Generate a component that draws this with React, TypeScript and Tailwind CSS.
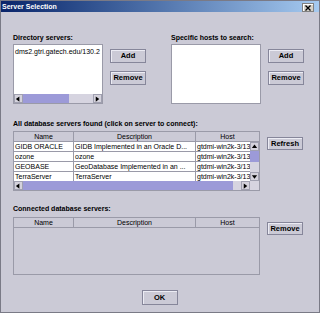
import type { ReactNode } from 'react'

const font = { fontFamily: '"Liberation Sans", Arial, sans-serif' }

function Button({ children, w = 'w-[36px]', h = 'h-[14px]' }: { children: ReactNode; w?: string; h?: string }) {
  return (
    <div
      className={`${w} ${h} shrink-0 flex items-center justify-center border border-[#86869a] shadow-[inset_1px_1px_0_#ececf4] text-[7.5px] font-bold text-black leading-none`}
    >
      {children}
    </div>
  )
}

function Arrow({ dir }: { dir: 'left' | 'right' | 'up' | 'down' }) {
  const pts = {
    left: '5,1 5,7 1,4',
    right: '2,1 2,7 6,4',
    up: '1,5 7,5 4,1',
    down: '1,2 7,2 4,6',
  }[dir]
  return (
    <div className="w-[9px] h-[9px] shrink-0 flex items-center justify-center border border-[#a0a0b0] bg-[#d4d2dc]">
      <svg width="8" height="8" viewBox="0 0 8 8">
        <polygon points={pts} fill="#000" />
      </svg>
    </div>
  )
}

const rows = [
  ['GIDB ORACLE', 'GIDB Implemented in an Oracle D...'],
  ['ozone', 'ozone'],
  ['GEOBASE', 'GeoDatabase Implemented in an ...'],
  ['TerraServer', 'TerraServer'],
]

function Header() {
  return (
    <div className="flex h-[10px] shrink-0 text-[7px] leading-[9px] text-black border-b border-[#9a9aa8]">
      <div className="w-[60px] shrink-0 text-center border-r border-[#9a9aa8]">Name</div>
      <div className="w-[122px] shrink-0 text-center border-r border-[#9a9aa8]">Description</div>
      <div className="flex-1 min-w-0 text-center">Host</div>
    </div>
  )
}

export default function App() {
  return (
    <div style={font} className="w-[320px] h-[313px] flex flex-col bg-[#cbcad6] border border-[#7a7a86] overflow-hidden">
      {/* タイトルバー */}
      <div className="h-[11px] flex items-center justify-between pl-[1px] pr-[5px] bg-gradient-to-r from-[#0a246a] to-[#a6caf0]">
        <span className="text-[7px] font-bold text-white leading-none">Server Selection</span>
        <div className="w-[12px] h-[9px] mt-[2px] flex items-center justify-center bg-[#d4d0c8] border border-[#808080] shadow-[inset_1px_1px_0_#fff]">
          <svg width="6" height="6" viewBox="0 0 6 6">
            <path d="M0.5 0.5 L5.5 5.5 M5.5 0.5 L0.5 5.5" stroke="#000" strokeWidth="1.3" />
          </svg>
        </div>
      </div>

      <div className="flex flex-col pl-[12px] pr-[16px]">
        {/* 上段 */}
        <div className="flex mt-[21px] gap-[25px]">
          <div className="flex flex-col">
            <div className="h-[9px] text-[7px] leading-[9px] font-bold text-black">Directory servers:</div>
            <div className="flex mt-[2px] gap-[7px]">
              <div className="w-[90px] h-[60px] shrink-0 flex flex-col bg-white border border-[#9a9aa8] overflow-hidden">
                <div className="flex-1 px-[1px] pt-[2px] text-[7px] leading-[9px] text-black whitespace-nowrap overflow-hidden">
                  dms2.gtri.gatech.edu/130.2
                </div>
                <div className="flex h-[9px] bg-[#d6d4e0]">
                  <Arrow dir="left" />
                  <div className="w-[46px] bg-[#9c9ad8]" />
                  <div className="flex-1" />
                  <Arrow dir="right" />
                </div>
              </div>
              <div className="flex flex-col gap-[8px] pt-[5px]">
                <Button>Add</Button>
                <Button>Remove</Button>
              </div>
            </div>
          </div>

          <div className="flex flex-col">
            <div className="h-[9px] text-[7px] leading-[9px] font-bold text-black">Specific hosts to search:</div>
            <div className="flex mt-[2px] gap-[7px]">
              <div className="w-[90px] h-[60px] shrink-0 bg-white border border-[#9a9aa8]" />
              <div className="flex flex-col gap-[8px] pt-[5px]">
                <Button>Add</Button>
                <Button>Remove</Button>
              </div>
            </div>
          </div>
        </div>

        {/* 検索結果 */}
        <div className="h-[9px] mt-[15px] text-[7px] leading-[9px] font-bold text-black">
          All database servers found (click on server to connect):
        </div>
        <div className="flex mt-[3px] gap-[7px]">
          <div className="w-[247px] h-[60px] shrink-0 flex flex-col border border-[#9a9aa8] overflow-hidden">
            <Header />
            <div className="flex flex-1 min-h-0">
              <div className="flex-1 min-w-0 flex flex-col bg-white">
                {rows.map(([name, desc]) => (
                  <div key={name} className="flex h-[10px] shrink-0 text-[7px] leading-[9px] text-black border-b border-[#9a9aa8]">
                    <div className="w-[60px] shrink-0 px-[1px] border-r border-[#9a9aa8] whitespace-nowrap overflow-hidden">{name}</div>
                    <div className="w-[122px] shrink-0 px-[1px] border-r border-[#9a9aa8] whitespace-nowrap overflow-hidden">{desc}</div>
                    <div className="flex-1 min-w-0 px-[1px] whitespace-nowrap overflow-hidden">gtdmi-win2k-3/130.207</div>
                  </div>
                ))}
              </div>
              <div className="w-[9px] shrink-0 flex flex-col bg-[#d6d4e0]">
                <Arrow dir="up" />
                <div className="h-[11px] bg-[#9c9ad8]" />
                <div className="flex-1" />
                <Arrow dir="down" />
              </div>
            </div>
            <div className="flex h-[9px] shrink-0 bg-[#d6d4e0]">
              <Arrow dir="left" />
              <div className="w-[210px] bg-[#9c9ad8]" />
              <div className="flex-1" />
              <Arrow dir="right" />
              <div className="w-[9px] shrink-0" />
            </div>
          </div>
          <div className="pt-[6px]">
            <Button h="h-[13px]">Refresh</Button>
          </div>
        </div>

        {/* 接続済み */}
        <div className="h-[9px] mt-[13px] text-[7px] leading-[9px] font-bold text-black">
          Connected database servers:
        </div>
        <div className="flex mt-[4px] gap-[7px]">
          <div className="w-[247px] h-[58px] shrink-0 flex flex-col border border-[#9a9aa8]">
            <Header />
          </div>
          <div className="pt-[5px]">
            <Button h="h-[13px]">Remove</Button>
          </div>
        </div>

        <div className="flex justify-center mt-[15px] pl-[3px]">
          <Button h="h-[15px]">OK</Button>
        </div>
      </div>
    </div>
  )
}
